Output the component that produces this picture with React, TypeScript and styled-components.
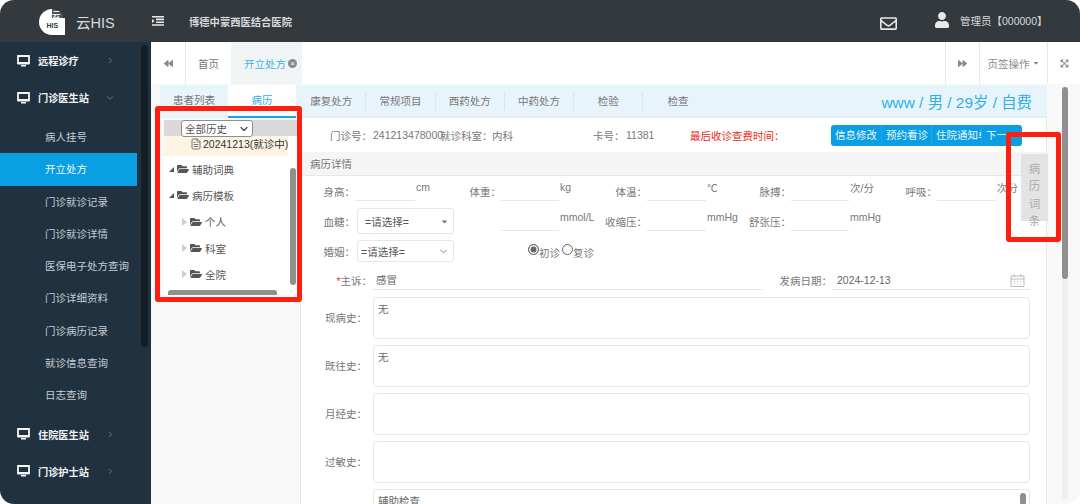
import * as React from "react";
import styled, { createGlobalStyle } from "styled-components";
import { FaFolderOpen, FaUser, FaBackward, FaForward, FaRegEnvelope, FaCaretDown, FaExpandArrowsAlt } from "react-icons/fa";
import { FileText, ChevronRight, ChevronDown } from "lucide-react";

const GlobalStyle = createGlobalStyle`
    html, body, #root { margin: 0; padding: 0; width: 1080px; height: 504px; overflow: hidden; background: #fff; }
    * { box-sizing: border-box; }
    body { font-family: "Liberation Sans", "Noto Sans CJK SC", sans-serif; font-size: 10.5px; color: #666; }
`;

const Shell = styled.div`
    position: relative;
    width: 1080px;
    height: 504px;
    border-radius: 14px;
    overflow: hidden;
    display: flex;
    flex-direction: column;
`;

/* top bar */
const TopBar = styled.div`
    height: 42px;
    flex: none;
    background: #34393d;
    display: flex;
    align-items: center;
    color: #e6e8ea;
`;
const Logo = styled.div`
    width: 27px;
    height: 27px;
    margin-left: 38px;
    flex: none;
    display: flex;
`;
const Brand = styled.div`
    margin-left: 11px;
    font-size: 14.5px;
    color: #d9dcde;
    width: 76px;
`;
const MenuIcon = styled.div`
    width: 12px;
    display: flex;
    flex: none;
`;
const Hospital = styled.div`
    margin-left: 25px;
    font-weight: bold;
    font-size: 10.3px;
    color: #d7dadc;
    flex: 1;
`;
const MailWrap = styled.div`
    display: flex;
    font-size: 17px;
    margin-right: 37px;
    margin-top: 4px;
`;
const UserWrap = styled.div`
    display: flex;
    font-size: 16px;
    margin-right: 10px;
    margin-top: -2px;
`;
const UserName = styled.div`
    width: 120px;
    margin-top: -2px;
    color: #d7dadc;
`;

const Body = styled.div`
    flex: 1;
    min-height: 0;
    display: flex;
`;

/* sidebar */
const Sidebar = styled.div`
    width: 151px;
    flex: none;
    background: #203140;
    display: flex;
`;
const SideList = styled.div`
    width: 137px;
    flex: none;
`;
const SideScroll = styled.div`
    width: 7px;
    height: 302px;
    margin: 3px 0 0 4px;
    border-radius: 4px;
    background: #141e27;
`;
const Group = styled.div`
    height: 37px;
    display: flex;
    align-items: center;
    padding-left: 17px;
    color: #f1f3f5;
    font-weight: bold;
    font-size: 10.2px;
    svg.chev { margin-left: auto; margin-right: 22px; color: #7d8a94; }
`;
const GroupText = styled.span`
    margin-left: 8px;
`;
const SubItem = styled.div<{ $active?: boolean }>`
    height: 32.3px;
    line-height: 32px;
    padding-left: 45px;
    color: ${({ $active }) => ($active ? "#e8f6fd" : "#c6ced4")};
    background: ${({ $active }) => ($active ? "#0a9fe3" : "transparent")};
`;
const SubList = styled.div`
    padding: 5px 0 4px;
`;

/* main */
const Main = styled.div`
    flex: 1;
    min-width: 0;
    background: #f8f8f8;
    display: flex;
    flex-direction: column;
`;
const PageTabs = styled.div`
    height: 42px;
    flex: none;
    background: #fff;
    display: flex;
    align-items: stretch;
`;
const PageBtn = styled.div<{ $w: number; $left?: boolean }>`
    width: ${({ $w }) => $w}px;
    display: flex;
    align-items: center;
    justify-content: center;
    gap: 2px;
    color: #8a8a8a;
    border-left: ${({ $left }) => ($left ? "1px solid #e7e7e7" : "none")};
`;
const HomeTab = styled.div`
    width: 46px;
    display: flex;
    align-items: center;
    justify-content: center;
    color: #777;
    border-left: 1px solid #e7e7e7;
`;
const ActiveTab = styled.div`
    width: 71px;
    display: flex;
    align-items: center;
    padding-left: 13px;
    gap: 2px;
    white-space: nowrap;
    color: #3fb0e6;
    background: #f1f4f5;
`;
const CloseDot = styled.span`
    width: 9px;
    height: 9px;
    flex: none;
    border-radius: 50%;
    background: #858c91;
    color: #fff;
    font-size: 8px;
    line-height: 9px;
    text-align: center;
`;
const TabSpacer = styled.div`
    flex: 1;
`;

const Work = styled.div`
    flex: 1;
    min-height: 0;
    display: flex;
    padding: 1px 0 0 9px;
`;
const LeftCol = styled.div`
    width: 140px;
    flex: none;
    display: flex;
    flex-direction: column;
`;
const SideTabs = styled.div`
    height: 33px;
    flex: none;
    display: flex;
`;
const SideTab = styled.div<{ $active?: boolean }>`
    width: 68px;
    text-align: center;
    line-height: 30px;
    color: ${({ $active }) => ($active ? "#2eaee8" : "#777")};
    background: ${({ $active }) => ($active ? "#fff" : "#e8f4fb")};
    border-bottom: 2px solid ${({ $active }) => ($active ? "#14a3e6" : "transparent")};
    border-radius: 4px 4px 0 0;
`;
const TreePanel = styled.div`
    width: 133px;
    height: 177px;
    margin: 2px 0 0 4px;
    background: #fff;
    position: relative;
`;
const HistoryBar = styled.div`
    height: 16px;
    background: #d9d9d9;
    padding-left: 17px;
    display: flex;
`;
const HistorySelect = styled.div`
    width: 72px;
    height: 17px;
    background: #fff;
    border: 1px solid #8f8f8f;
    border-radius: 3px;
    color: #555;
    display: flex;
    align-items: center;
    justify-content: space-between;
    padding: 0 2px 0 3px;
    svg { color: #444; }
`;
const VisitRow = styled.div`
    height: 20px;
    width: 124px;
    background: #fdf4e3;
    display: flex;
    align-items: center;
    padding: 0 0 5px 26px;
    gap: 1px;
    color: #333;
    white-space: nowrap;
    overflow: hidden;
    svg { flex: none; color: #777; }
`;
const TreeRow = styled.div<{ $indent: number }>`
    height: 26.3px;
    display: flex;
    align-items: center;
    padding-left: ${({ $indent }) => $indent}px;
    color: #555;
    gap: 3px;
    svg { color: #555; font-size: 12px; }
`;
const Tri = styled.span<{ $open?: boolean }>`
    width: 0;
    height: 0;
    border-style: solid;
    ${({ $open }) =>
        $open
            ? "border-width: 0 0 5px 5px; border-color: transparent transparent #555 transparent;"
            : "border-width: 4px 0 4px 5px; border-color: transparent transparent transparent #ccc;"}
`;
const TreeV = styled.div`
    position: absolute;
    right: 1px;
    top: 48px;
    width: 6px;
    height: 117px;
    border-radius: 3px;
    background: #8f8f8f;
`;
const TreeH = styled.div`
    position: absolute;
    left: 4px;
    bottom: 2px;
    width: 109px;
    height: 5px;
    border-radius: 3px 3px 0 0;
    background: #8f8f8f;
`;

const RightCol = styled.div`
    width: 751px;
    margin-left: -4px;
    display: flex;
    flex-direction: column;
    min-height: 0;
`;
const TopTabs = styled.div`
    height: 33px;
    flex: none;
    background: #e8f4fb;
    display: flex;
    align-items: center;
    padding-left: 1px;
    border-bottom: 2px solid #e4eef3;
`;
const TopTab = styled.div<{ $last?: boolean }>`
    width: 69.3px;
    height: 18px;
    line-height: 18px;
    text-align: center;
    color: #777;
    border-right: ${({ $last }) => ($last ? "none" : "1px solid #dbe5ea")};
`;
const PatientInfo = styled.div`
    margin-left: auto;
    margin-right: 15px;
    font-size: 15.4px;
    color: #2fb0e6;
`;
const Sheet = styled.div`
    flex: 1;
    min-height: 0;
    margin-left: 4px;
    background: #fff;
    overflow: hidden;
    border-left: 1px solid #e8e8e8;
    border-right: 1px solid #e8e8e8;
`;
const InfoRow = styled.div`
    height: 34px;
    display: flex;
    align-items: center;
    padding-left: 29px;
`;
const InfoCell = styled.span<{ $w: number; $color?: string }>`
    width: ${({ $w }) => $w}px;
    flex: none;
    white-space: nowrap;
    color: ${({ $color }) => $color ?? "#777"};
`;
const ActionGroup = styled.div`
    width: 191px;
    height: 21px;
    background: #0a9fe3;
    border-radius: 3px;
    display: flex;
    color: #e8f6fd;
    line-height: 20px;
    flex: none;
`;
const Action = styled.span<{ $w: number }>`
    width: ${({ $w }) => $w}px;
    padding-left: 4px;
    white-space: nowrap;
    overflow: hidden;
    border-right: 1px solid #1fa9e8;
    &:last-child { border-right: none; }
`;
const SectionHead = styled.div`
    height: 24px;
    line-height: 24px;
    background: #f5f5f5;
    border-bottom: 1px solid #e7e7e7;
    padding-left: 9px;
    color: #777;
`;
const Form = styled.div`
    padding-top: 4px;
`;
const Row = styled.div<{ $h: number; $top?: number }>`
    height: ${({ $h }) => $h}px;
    margin-top: ${({ $top }) => $top ?? 0}px;
    display: flex;
    align-items: center;
`;
const Label = styled.label<{ $w: number }>`
    width: ${({ $w }) => $w}px;
    flex: none;
    text-align: right;
    color: #777;
    white-space: nowrap;
`;
const Req = styled.span`
    color: #e33;
`;
const Line = styled.div<{ $w: number; $l?: number }>`
    width: ${({ $w }) => $w}px;
    margin-left: ${({ $l }) => $l ?? 0}px;
    height: 20px;
    flex: none;
    border-bottom: 1px solid #e8e8e8;
`;
const Unit = styled.span<{ $w: number }>`
    width: ${({ $w }) => $w}px;
    flex: none;
    padding-left: 1px;
    margin-top: -8px;
    color: #777;
    white-space: nowrap;
`;
const Select = styled.div<{ $h: number; $native?: boolean }>`
    width: 97px;
    height: ${({ $h }) => $h}px;
    margin-left: 2px;
    flex: none;
    border: 1px solid #e6e6e6;
    border-radius: 3px;
    display: flex;
    align-items: center;
    justify-content: space-between;
    padding: 0 4px 0 ${({ $native }) => ($native ? 3 : 7)}px;
    color: #555;
    svg { color: #777; }
`;
const Radio = styled.span<{ $on?: boolean; $l?: number }>`
    width: 11px;
    height: 11px;
    flex: none;
    margin-left: ${({ $l }) => $l ?? 0}px;
    border-radius: 50%;
    border: 1px solid #666;
    background: ${({ $on }) => ($on ? "#666" : "#fff")};
    box-shadow: ${({ $on }) => ($on ? "inset 0 0 0 1.5px #fff" : "none")};
    margin-top: -3px;
`;
const RadioText = styled.span`
    margin-right: 2px;
    margin-top: 2px;
    color: #777;
`;
const TextValue = styled.div<{ $w: number; $pad?: number }>`
    width: ${({ $w }) => $w}px;
    height: 100%;
    flex: none;
    display: flex;
    align-items: center;
    justify-content: space-between;
    padding: 0 5px 0 ${({ $pad }) => $pad ?? 4}px;
    border-bottom: 1px solid #e8e8e8;
    color: #666;
`;
const AreaRow = styled.div<{ $top?: number }>`
    display: flex;
    align-items: center;
    margin-top: ${({ $top }) => $top ?? 6}px;
    ${Label} { margin-top: -2px; }
`;
const Area = styled.div`
    width: 657px;
    height: 42px;
    flex: none;
    margin-left: 6px;
    border: 1px solid #e8e8e8;
    border-radius: 4px;
    padding: 3px 4px;
    color: #666;
    position: relative;
`;
const AreaThumb = styled.span`
    position: absolute;
    right: 3px;
    top: 3px;
    width: 6px;
    height: 12px;
    border-radius: 3px;
    background: #8f8f8f;
`;

/* page scrollbar */
const PageScroll = styled.div`
    width: 6px;
    height: 412px;
    margin: 2px 0 0 15px;
    flex: none;
    background: #efefef;
    border-radius: 3px;
`;
const PageThumb = styled.div`
    height: 192px;
    border-radius: 3px;
    background: #8f8f8f;
`;

const TermTab = styled.div`
    position: absolute;
    left: 1021px;
    top: 154px;
    width: 27px;
    height: 67px;
    padding-top: 7px;
    background: #e3e3e3;
    color: #aaa;
    font-size: 11.5px;
    line-height: 17.3px;
    text-align: center;
`;
const Mark = styled.div<{ $x: number; $y: number; $w: number; $h: number }>`
    position: absolute;
    left: ${({ $x }) => $x}px;
    top: ${({ $y }) => $y}px;
    width: ${({ $w }) => $w}px;
    height: ${({ $h }) => $h}px;
    border: 5px solid #ff1f10;
    border-radius: 3px;
    pointer-events: none;
`;
const LogoText = styled.text`
    font-family: "Liberation Sans", "Noto Sans CJK SC", sans-serif;
    font-weight: bold;
`;

const Monitor = () => (
    <svg width="13" height="12" viewBox="0 0 13 12">
        <path d="M1 1h11v7H1z" fill="none" stroke="#f4f6f7" strokeWidth="1.8" />
        <path d="M0.5 8h12v1.5H0.5zM4 10h5v1.5H4z" fill="#f4f6f7" />
    </svg>
);

const SUB_ITEMS = ["病人挂号", "开立处方", "门诊就诊记录", "门诊就诊详情", "医保电子处方查询", "门诊详细资料", "门诊病历记录", "就诊信息查询", "日志查询"];
const TOP_TABS = ["康复处方", "常规项目", "西药处方", "中药处方", "检验", "检查"];

export default function App() {
    return (
        <Shell>
            <GlobalStyle />
            <TopBar>
                <Logo>
                    <svg width="27" height="27" viewBox="0 0 27 27">
                        <path d="M14 1A13 13 0 0 0 14 27H27V10H14z" fill="#fff" />
                        <path d="M14 1A13 13 0 0 1 25 7L25 10H14z" fill="#fff" opacity="0.12" />
                        <LogoText x="14" y="10" fontSize="8.5" fill="#f2f2f2">云</LogoText>
                        <LogoText x="8.5" y="20" fontSize="7" fill="#34393d">HIS</LogoText>
                    </svg>
                </Logo>
                <Brand>云HIS</Brand>
                <MenuIcon>
                    <svg width="12" height="10" viewBox="0 0 12 10" fill="#e8eaec">
                        <path d="M0 0h12v1.6H0zM4 2.6h8v1.6H4zM4 5.4h8V7H4zM0 8.2h12v1.6H0zM0 3l2.6 2L0 7z" />
                    </svg>
                </MenuIcon>
                <Hospital>博德中蒙西医结合医院</Hospital>
                <MailWrap><FaRegEnvelope /></MailWrap>
                <UserWrap><FaUser /></UserWrap>
                <UserName>管理员【000000】</UserName>
            </TopBar>
            <Body>
                <Sidebar>
                    <SideList>
                        <Group><Monitor /><GroupText>远程诊疗</GroupText><ChevronRight className="chev" size={9} /></Group>
                        <Group><Monitor /><GroupText>门诊医生站</GroupText><ChevronDown className="chev" size={10} /></Group>
                        <SubList>
                            {SUB_ITEMS.map((s, i) => (
                                <SubItem key={s} $active={i === 1}>{s}</SubItem>
                            ))}
                        </SubList>
                        <Group><Monitor /><GroupText>住院医生站</GroupText><ChevronRight className="chev" size={9} /></Group>
                        <Group><Monitor /><GroupText>门诊护士站</GroupText><ChevronRight className="chev" size={9} /></Group>
                    </SideList>
                    <SideScroll />
                </Sidebar>
                <Main>
                    <PageTabs>
                        <PageBtn $w={34}><FaBackward size={9} /></PageBtn>
                        <HomeTab>首页</HomeTab>
                        <ActiveTab>开立处方<CloseDot>×</CloseDot></ActiveTab>
                        <TabSpacer />
                        <PageBtn $w={34} $left><FaForward size={9} /></PageBtn>
                        <PageBtn $w={68} $left>页签操作<FaCaretDown size={8} /></PageBtn>
                        <PageBtn $w={33} $left><FaExpandArrowsAlt size={9} /></PageBtn>
                    </PageTabs>
                    <Work>
                        <LeftCol>
                            <SideTabs>
                                <SideTab>患者列表</SideTab>
                                <SideTab $active>病历</SideTab>
                            </SideTabs>
                            <TreePanel>
                                <HistoryBar>
                                    <HistorySelect>全部历史<ChevronDown size={12} strokeWidth={2.4} /></HistorySelect>
                                </HistoryBar>
                                <VisitRow><FileText size={12} />20241213(就诊中)</VisitRow>
                                <TreeRow $indent={5}><Tri $open /><FaFolderOpen />辅助词典</TreeRow>
                                <TreeRow $indent={5}><Tri $open /><FaFolderOpen />病历模板</TreeRow>
                                <TreeRow $indent={18}><Tri /><FaFolderOpen />个人</TreeRow>
                                <TreeRow $indent={18}><Tri /><FaFolderOpen />科室</TreeRow>
                                <TreeRow $indent={18}><Tri /><FaFolderOpen />全院</TreeRow>
                                <TreeV />
                                <TreeH />
                            </TreePanel>
                        </LeftCol>
                        <RightCol>
                            <TopTabs>
                                {TOP_TABS.map((t, i) => (
                                    <TopTab key={t} $last={i === TOP_TABS.length - 1}>{t}</TopTab>
                                ))}
                                <PatientInfo>www / 男 / 29岁 / 自费</PatientInfo>
                            </TopTabs>
                            <Sheet>
                                <InfoRow>
                                    <InfoCell $w={43}>门诊号：</InfoCell>
                                    <InfoCell $w={67}>241213478000</InfoCell>
                                    <InfoCell $w={52}>就诊科室：</InfoCell>
                                    <InfoCell $w={101}>内科</InfoCell>
                                    <InfoCell $w={33}>卡号：</InfoCell>
                                    <InfoCell $w={64}>11381</InfoCell>
                                    <InfoCell $w={141} $color="#e8281c">最后收诊查费时间：</InfoCell>
                                    <ActionGroup>
                                        <Action $w={51}>信息修改</Action>
                                        <Action $w={50}>预约看诊</Action>
                                        <Action $w={50}>住院通知单</Action>
                                        <Action $w={40}>下一</Action>
                                    </ActionGroup>
                                </InfoRow>
                                <SectionHead>病历详情</SectionHead>
                                <Form>
                                    <Row $h={22}>
                                        <Label $w={54}>身高：</Label>
                                        <Line $w={60} /><Unit $w={28}>cm</Unit>
                                        <Label $w={58}>体重：</Label>
                                        <Line $w={58} /><Unit $w={27}>kg</Unit>
                                        <Label $w={61}>体温：</Label>
                                        <Line $w={59} /><Unit $w={25}>℃</Unit>
                                        <Label $w={60}>脉搏：</Label>
                                        <Line $w={58} /><Unit $w={30}>次/分</Unit>
                                        <Label $w={58}>呼吸：</Label>
                                        <Line $w={59} /><Unit $w={24}>次分</Unit>
                                    </Row>
                                    <Row $h={38}>
                                        <Label $w={54}>血糖：</Label>
                                        <Select $h={26}>=请选择=<FaCaretDown size={9} /></Select>
                                        <Line $w={58} $l={47} /><Unit $w={27}>mmol/L</Unit>
                                        <Label $w={61}>收缩压：</Label>
                                        <Line $w={59} /><Unit $w={25}>mmHg</Unit>
                                        <Label $w={60}>舒张压：</Label>
                                        <Line $w={58} /><Unit $w={30}>mmHg</Unit>
                                    </Row>
                                    <Row $h={22}>
                                        <Label $w={54}>婚姻：</Label>
                                        <Select $h={22} $native>=请选择=<ChevronDown size={11} /></Select>
                                        <Radio $on $l={74} /><RadioText>初诊</RadioText>
                                        <Radio /><RadioText>复诊</RadioText>
                                    </Row>
                                    <Row $h={20} $top={8}>
                                        <Label $w={71}><Req>*</Req>主诉：</Label>
                                        <TextValue $w={391}>感冒</TextValue>
                                        <Label $w={69}>发病日期：</Label>
                                        <TextValue $w={198} $pad={5}>
                                            2024-12-13
                                            <svg width="15" height="14" viewBox="0 0 15 14" fill="none" stroke="#bbb">
                                                <path d="M1 3h13v10.5H1zM1 6h13M4 1v3M11 1v3" />
                                                <path d="M4 8.5h1M7 8.5h1M10 8.5h1M4 11h1M7 11h1M10 11h1" />
                                            </svg>
                                        </TextValue>
                                    </Row>
                                    <AreaRow $top={7}><Label $w={66}>现病史：</Label><Area>无</Area></AreaRow>
                                    <AreaRow><Label $w={66}>既往史：</Label><Area>无</Area></AreaRow>
                                    <AreaRow><Label $w={66}>月经史：</Label><Area /></AreaRow>
                                    <AreaRow><Label $w={66}>过敏史：</Label><Area /></AreaRow>
                                    <AreaRow><Label $w={66} /><Area>辅助检查<AreaThumb /></Area></AreaRow>
                                </Form>
                            </Sheet>
                        </RightCol>
                        <PageScroll><PageThumb /></PageScroll>
                    </Work>
                </Main>
            </Body>
            <TermTab>病<br />历<br />词<br />条</TermTab>
            <Mark $x={155} $y={106} $w={147} $h={196} />
            <Mark $x={1006} $y={132} $w={55} $h={110} />
        </Shell>
    );
}
